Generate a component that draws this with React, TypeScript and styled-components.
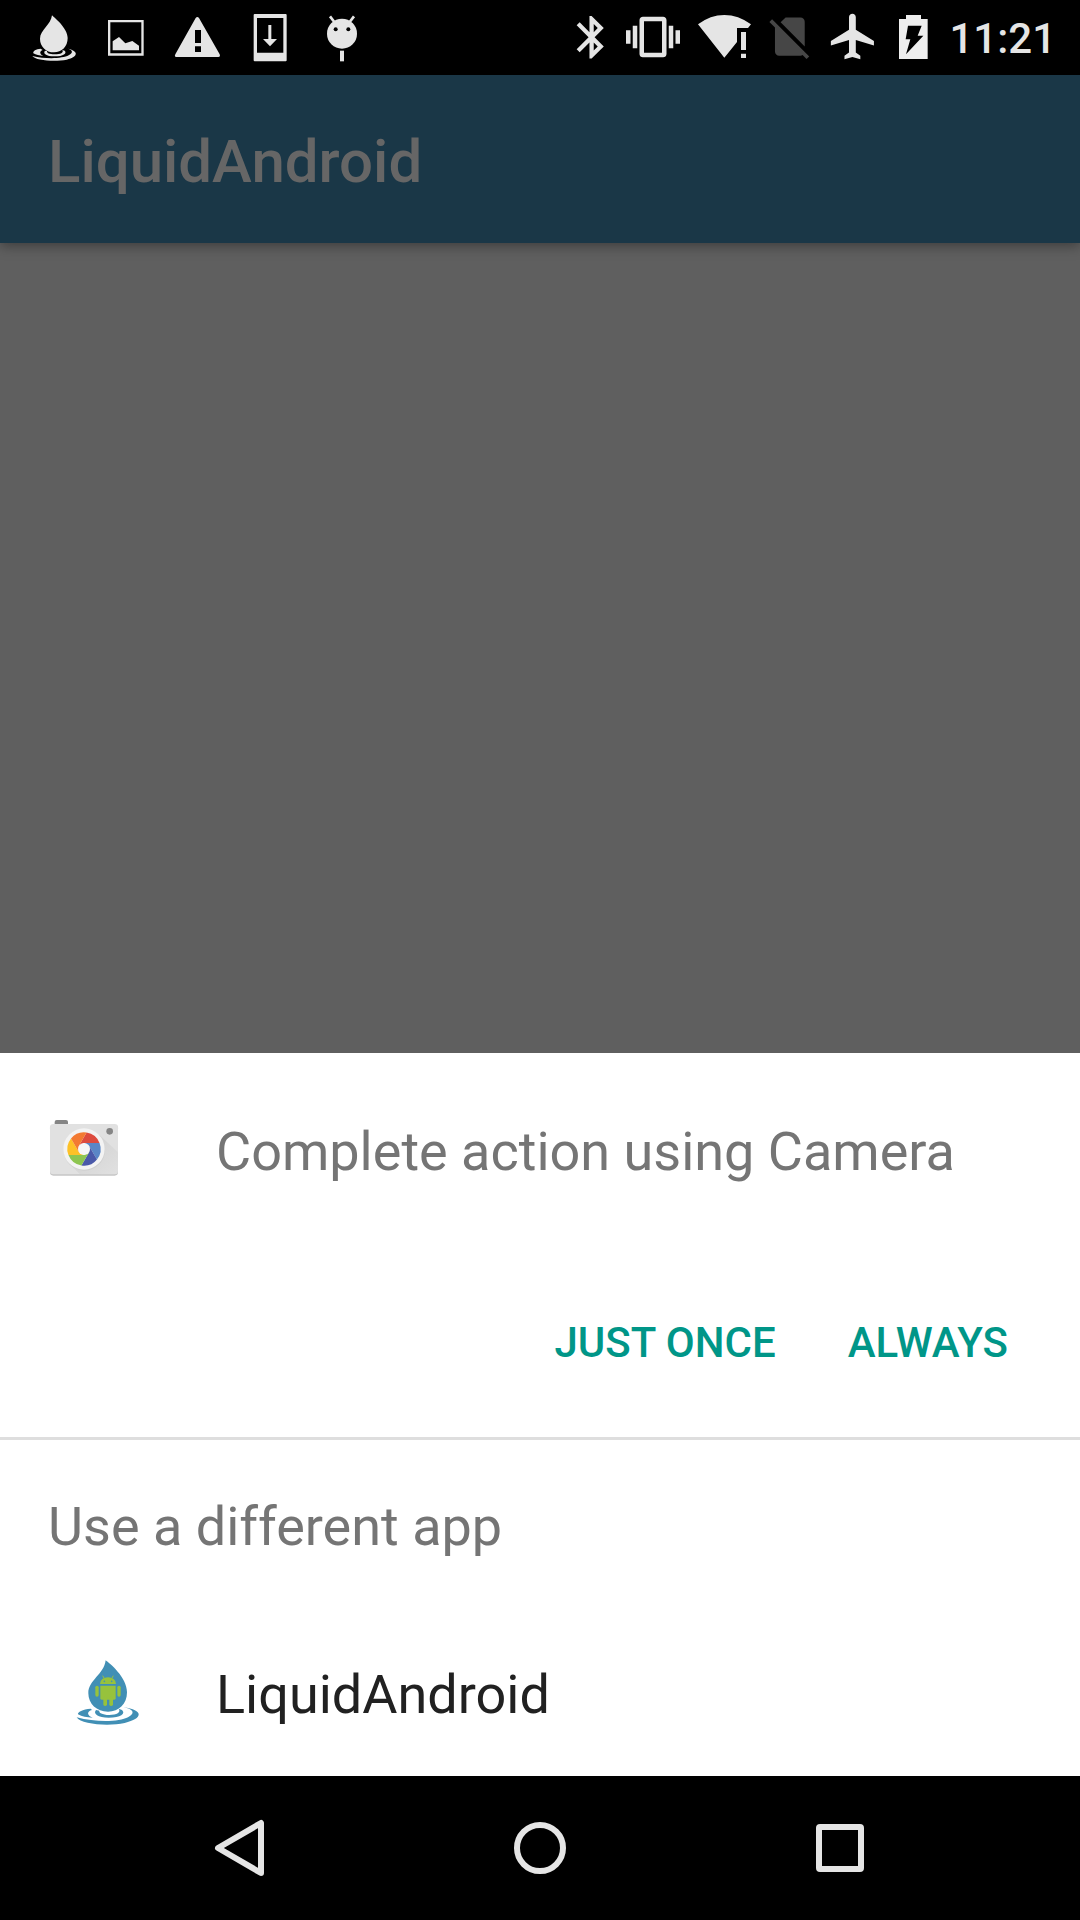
import React from "react";
import styled, { createGlobalStyle } from "styled-components";

const GlobalStyle = createGlobalStyle`
  *, *::before, *::after { box-sizing: border-box; }
  body { margin: 0; background: #000; font-family: Roboto, "Liberation Sans", sans-serif; }
  svg { display: block; flex: none; }
`;

const Screen = styled.div`
  display: flex;
  flex-direction: column;
  min-height: 100vh;
  background: #5f5f5f;
`;

const StatusBar = styled.div`
  display: flex;
  justify-content: space-between;
  align-items: center;
  height: 75px;
  padding: 0 24px 0 18px;
  background: #000;
  color: #e5e5e5;
`;

const StatusGroup = styled.div`
  display: flex;
  align-items: center;
`;

const Clock = styled.time`
  padding: 3px 0 0 7px;
  font-size: 42px;
  font-weight: 500;
  line-height: 48px;
`;

const AppBar = styled.header`
  display: flex;
  align-items: center;
  height: 168px;
  padding: 6px 48px 0;
  background: #1a3747;
  box-shadow: 0 3px 12px rgba(0, 0, 0, 0.36);
`;

const AppTitle = styled.h1`
  margin: 0;
  color: #666;
  font-size: 60px;
  font-weight: 500;
  line-height: 72px;
`;

const Backdrop = styled.main`
  flex: 1;
`;

const Sheet = styled.section`
  background: #fff;
`;

const SheetHeader = styled.div`
  display: flex;
  align-items: center;
  gap: 96px;
  padding: 63px 48px 83px;
`;

const SheetText = styled.h2`
  margin: 0;
  color: #757575;
  font-size: 54px;
  font-weight: 400;
  line-height: 64px;
`;

const Actions = styled.div`
  display: flex;
  justify-content: flex-end;
  gap: 24px;
  padding: 0 48px 22px;
`;

const ActionButton = styled.button`
  height: 144px;
  padding: 0 24px;
  border: 0;
  background: none;
  color: #009688;
  font-family: inherit;
  font-size: 42px;
  font-weight: 500;
  line-height: 48px;
  text-transform: uppercase;
`;

const OtherApps = styled.div`
  border-top: 3px solid #dedede;
`;

const OtherTitle = styled.div`
  padding: 55px 48px 53px;
`;

const AppRow = styled.button`
  display: flex;
  align-items: center;
  gap: 72px;
  width: 100%;
  padding: 47px 72px 45px;
  border: 0;
  background: none;
  color: #212121;
  font-family: inherit;
  font-size: 54px;
  line-height: 64px;
  text-align: left;
`;

const NavBar = styled.nav`
  display: flex;
  height: 144px;
  padding: 0 90px;
  background: #000;
`;

const NavButton = styled.button`
  display: flex;
  flex: 1;
  align-items: center;
  justify-content: center;
  padding: 0;
  border: 0;
  background: none;
  color: #e5e5e5;
`;

type GlyphProps = { width?: number; color?: string; children: React.ReactNode };

function Glyph({ width = 72, color = "#e5e5e5", children }: GlyphProps) {
  return (
    <svg width={width} height="75" viewBox={`0 0 ${width * 3} 225`} fill={color} aria-hidden="true">
      {children}
    </svg>
  );
}

function Notifications() {
  return (
    <StatusGroup>
      <Glyph>
        <path d="M102 46C108 52 149 84 149 114C149 140 131 157 108 157C84 157 66 140 66 116C66 91 99 74 102 46Z" />
        <path d="M68 146C54 147 44 153 46 160C54 165 64 167 76 168C64 162 64 154 74 150Z" />
        <path d="M81 152C74 160 84 169 110 169C136 169 148 160 140 152L133 150C138 158 128 163 110 163C94 163 86 159 87 153Z" />
        <path d="M144 145C164 149 168 158 152 166C134 176 84 178 43 168C52 182 112 186 146 179C182 171 184 152 144 145Z" />
      </Glyph>
      <Glyph>
        <path fillRule="evenodd" d="M54 60H161V167H54ZM61 67V160H154V67Z" />
        <path d="M68 151V124L87 111L106 130L127 123L147 137V151Z" />
      </Glyph>
      <Glyph>
        <path fillRule="evenodd" d="M101 54Q106 48 111 54L173 163Q176 171 169 171H43Q36 171 40 163ZM99 90V129H117V90ZM99 139V156H117V139Z" />
      </Glyph>
      <Glyph>
        <path fillRule="evenodd" d="M62 42H155Q158 42 158 45V181Q158 184 155 184H62Q59 184 59 181V45Q59 42 62 42ZM69 54V158H148V54Z" />
        <path d="M103 75H112V117H129L108 139L87 117H103Z" />
      </Glyph>
      <Glyph>
        <circle cx="108" cy="101" r="45" />
        <path d="M72 49L85 66M144 49L131 66" stroke="#e5e5e5" strokeWidth="8" />
        <circle cx="89" cy="88" r="6" fill="#000" />
        <circle cx="127" cy="88" r="6" fill="#000" />
        <path d="M102 152H114V184H102Z" />
      </Glyph>
    </StatusGroup>
  );
}

function SystemStatus() {
  return (
    <StatusGroup>
      <Glyph width={56}>
        <path transform="translate(12 35) scale(6.4)" d="M17.71 7.71L12 2h-1v7.59L6.41 5 5 6.41 10.59 12 5 17.59 6.41 19 11 14.41V22h1l5.71-5.71-4.3-4.29 4.3-4.29zM13 5.83l1.88 1.88L13 9.59V5.83zm1.88 10.46L13 18.17v-3.76l1.88 1.88z" />
      </Glyph>
      <Glyph width={72}>
        <path transform="translate(24 30) scale(6.75)" d="M0 15h2V9H0v6zm3 2h2V7H3v10zm19-8v6h2V9h-2zm-3 8h2V7h-2v10zM16.5 3h-9C6.67 3 6 3.67 6 4.5v15c0 .83.67 1.5 1.5 1.5h9c.83 0 1.5-.67 1.5-1.5v-15c0-.83-.67-1.5-1.5-1.5zM16 19H8V5h8v14z" />
      </Glyph>
      <Glyph width={70}>
        <path d="M103 173L24 73Q61 45 103 45T183 73L174 84H141V126Z" />
        <path d="M153 96H168V150H153ZM153 161H168V174H153Z" />
      </Glyph>
      <Glyph width={60} color="#464646">
        <path transform="translate(13 33) scale(6.38)" d="M18.99 5c0-1.1-.89-2-1.99-2h-7L7.66 5.34 19 16.68 18.99 5zM3.65 3.88L2.38 5.15 5 7.77V19c0 1.1.9 2 2 2h10.01c.35 0 .67-.1.96-.26l1.88 1.88 1.27-1.27L3.65 3.88z" />
      </Glyph>
      <Glyph width={64}>
        <path transform="translate(19 28) scale(6.8)" d="M21 16v-2l-8-5V3.5c0-.83-.67-1.5-1.5-1.5S10 2.67 10 3.5V9l-8 5v2l8-2.5V19l-2 1.5V22l3.5-1 3.5 1v-1.5L13 19v-5.5l8 2.5z" />
      </Glyph>
      <Glyph width={58} color="#eee">
        <path fillRule="evenodd" d="M66 45H111V57H131V177H45V57H66ZM72 77L65 118H79L66 163L118 107H101L113 77Z" />
      </Glyph>
      <Clock>11:21</Clock>
    </StatusGroup>
  );
}

const blades = ["#dd4b3e", "#5a86c6", "#4a59a9", "#8dc550", "#fdc127", "#f37a32"];

function CameraIcon() {
  return (
    <svg width="72" height="72" viewBox="0 3 216 216" aria-hidden="true">
      <defs>
        <linearGradient id="lensShadow" x1="0" y1="0" x2="1" y2="1">
          <stop offset="0.4" stopColor="#b8b8b8" />
          <stop offset="1" stopColor="#e0e0e0" />
        </linearGradient>
      </defs>
      <path d="M20 32V21Q20 15 26 15H54Q60 15 60 21V32Z" fill="#858585" />
      <rect x="6" y="30" width="204" height="152" rx="10" fill="#c6c6c6" />
      <rect x="6" y="27" width="204" height="151" rx="10" fill="#e1e1e1" />
      <path d="M152 58L210 112V168Q210 178 200 178H96L64 146Z" fill="url(#lensShadow)" opacity="0.3" />
      <circle cx="185" cy="49" r="10" fill="#858585" />
      <circle cx="109" cy="105" r="62" fill="#cfcfcf" />
      <circle cx="108" cy="102" r="62" fill="#f3f3f3" />
      <g transform="translate(108 102)">
        {blades.map((fill, i) => (
          <path key={fill} transform={`rotate(${i * 60})`} fill={fill} d="M-15.6 -9L7.7 -49.4A50 50 0 0 1 46.6 -18L0 -18Z" />
        ))}
        <circle r="18" fill="#f6f6f6" />
      </g>
    </svg>
  );
}

function LiquidIcon() {
  return (
    <svg width="72" height="72" viewBox="0 3 216 216" aria-hidden="true">
      <g fill="#418fb5">
        <path d="M101 7C112 15 165 58 165 103C165 138 141 161 108 161C74 161 49 138 49 106C49 66 96 50 101 7Z" />
        <path d="M56 152C32 154 16 162 18 169C30 176 44 178 62 179C44 172 44 160 60 156Z" />
        <path d="M72 156C62 167 78 179 110 179C146 179 162 167 150 156L140 152C148 163 134 170 112 171C90 170 80 164 82 158Z" />
        <path d="M154 148C186 153 190 167 168 178C142 192 72 194 14 178C26 199 110 206 158 195C214 182 216 156 154 148Z" />
      </g>
      <g fill="#97c23c">
        <path d="M84 78Q86 58 108 58T132 78Z" />
        <path d="M92 53L97 62M124 53L119 62" stroke="#97c23c" strokeWidth="3" />
        <path d="M85 83H131V121Q131 125 127 125H89Q85 125 85 121Z" />
        <rect x="70" y="83" width="10" height="33" rx="5" />
        <rect x="136" y="83" width="10" height="33" rx="5" />
        <rect x="94" y="116" width="11" height="28" rx="5" />
        <rect x="112" y="116" width="11" height="28" rx="5" />
      </g>
      <circle cx="97" cy="70" r="2.5" fill="#418fb5" />
      <circle cx="119" cy="70" r="2.5" fill="#418fb5" />
    </svg>
  );
}

export default function App() {
  return (
    <>
      <GlobalStyle />
      <Screen>
        <StatusBar>
          <Notifications />
          <SystemStatus />
        </StatusBar>
        <AppBar>
          <AppTitle>LiquidAndroid</AppTitle>
        </AppBar>
        <Backdrop />
        <Sheet>
          <SheetHeader>
            <CameraIcon />
            <SheetText>Complete action using Camera</SheetText>
          </SheetHeader>
          <Actions>
            <ActionButton type="button">Just once</ActionButton>
            <ActionButton type="button">Always</ActionButton>
          </Actions>
          <OtherApps>
            <OtherTitle>
              <SheetText>Use a different app</SheetText>
            </OtherTitle>
            <AppRow type="button">
              <LiquidIcon />
              LiquidAndroid
            </AppRow>
          </OtherApps>
        </Sheet>
        <NavBar>
          <NavButton type="button" aria-label="Back">
            <svg width="72" height="72" viewBox="0 0 72 72" fill="none" stroke="currentColor" strokeWidth="6" strokeLinejoin="round">
              <path d="M57 11V61L14 36Z" />
            </svg>
          </NavButton>
          <NavButton type="button" aria-label="Home">
            <svg width="72" height="72" viewBox="0 0 72 72" fill="none" stroke="currentColor" strokeWidth="6">
              <circle cx="36" cy="36" r="23" />
            </svg>
          </NavButton>
          <NavButton type="button" aria-label="Recent apps">
            <svg width="72" height="72" viewBox="0 0 72 72" fill="none" stroke="currentColor" strokeWidth="6" strokeLinejoin="round">
              <rect x="15" y="15" width="42" height="42" rx="1" />
            </svg>
          </NavButton>
        </NavBar>
      </Screen>
    </>
  );
}
